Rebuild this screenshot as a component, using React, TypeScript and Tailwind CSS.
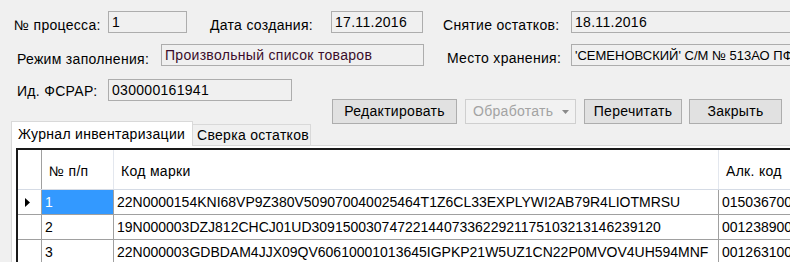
import React from 'react'

const font = "font-['Liberation_Sans',Arial,sans-serif]"

function Field({ w, text, className = '' }: { w: string; text: string; className?: string }) {
  return (
    <div
      className={`${w} h-[22px] shrink-0 border border-[#adadad] bg-[#f0f0f0] pl-[3px] pt-[3px] whitespace-nowrap overflow-hidden ${className}`}
    >
      {text}
    </div>
  )
}

const rows = [
  {
    n: '1',
    code: '22N0000154KNI68VP9Z380V509070040025464T1Z6CL33EXPLYWI2AB79R4LIOTMRSU',
    alc: '0150367000001',
  },
  {
    n: '2',
    code: '19N000003DZJ812CHCJ01UD309150030747221440733622921175103213146239120',
    alc: '0012389000001',
  },
  {
    n: '3',
    code: '22N000003GDBDAM4JJX09QV60610001013645IGPKP21W5UZ1CN22P0MVOV4UH594MNF',
    alc: '0012631000001',
  },
]

export default function App() {
  return (
    <div
      className={`w-[790px] h-[262px] overflow-hidden bg-[#f0f0f0] text-[14px] leading-[15px] tracking-[0.3px] text-black ${font}`}
    >
      {/* row 1 */}
      <div className="flex items-start pt-[11px]">
        <div className="ml-[14px] mt-[7px] w-[94px] shrink-0 whitespace-nowrap">№ процесса:</div>
        <Field w="w-[79px]" text="1" />
        <div className="ml-[23px] mt-[7px] w-[121px] shrink-0 whitespace-nowrap">Дата создания:</div>
        <Field w="w-[92px]" text="17.11.2016" />
        <div className="ml-[20px] mt-[7px] w-[128px] shrink-0 whitespace-nowrap">Снятие остатков:</div>
        <Field w="w-[240px]" text="18.11.2016" />
      </div>

      {/* row 2 */}
      <div className="flex items-start mt-[11px]">
        <div className="ml-[17px] mt-[8px] w-[144px] shrink-0 whitespace-nowrap">Режим заполнения:</div>
        <Field w="w-[263px]" text="Произвольный список товаров" className="text-[#3a0d2a]" />
        <div className="ml-[23px] mt-[7px] w-[124px] shrink-0 whitespace-nowrap">Место хранения:</div>
        <Field w="w-[240px]" text="'СЕМЕНОВСКИЙ' С/М № 513АО ПФ" className="text-[13px] tracking-normal" />
      </div>

      {/* row 3 */}
      <div className="flex items-start mt-[12px]">
        <div className="ml-[17px] mt-[5px] w-[91px] shrink-0 whitespace-nowrap">Ид. ФСРАР:</div>
        <Field w="w-[184px]" text="030000161941" />
      </div>

      {/* buttons */}
      <div className="flex items-start -mt-[2px] pl-[332px]">
        <button className="w-[125px] h-[25px] border border-[#adadad] bg-[#e1e1e1] text-center">
          Редактировать
        </button>
        <button className="ml-[8px] w-[111px] h-[25px] border border-[#cfcfcf] bg-[#f2f2f2] text-[#a3a3a3] flex items-center pl-[7px]">
          <span>Обработать</span>
          <svg width="7" height="4" viewBox="0 0 7 4" className="ml-[9px]">
            <path d="M0 0h7L3.5 4z" fill="#8a8a8a" />
          </svg>
        </button>
        <button className="ml-[8px] w-[98px] h-[25px] border border-[#adadad] bg-[#e1e1e1] text-center">
          Перечитать
        </button>
        <button className="ml-[7px] w-[93px] h-[25px] border border-[#adadad] bg-[#e1e1e1] text-center">
          Закрыть
        </button>
      </div>

      {/* tabs */}
      <div className="flex items-start h-[24px] -mt-[3px] ml-[11px]">
        <div className="relative z-10 w-[182px] h-[25px] border border-b-0 border-[#d9d9d9] bg-white pl-[6px] pt-[5px] whitespace-nowrap">
          Журнал инвентаризации
        </div>
        <div className="mt-[3px] w-[118px] h-[21px] border border-b-0 border-l-0 border-[#d9d9d9] bg-[#f0f0f0] pl-[4px] pt-[3px] whitespace-nowrap">
          Сверка остатков
        </div>
      </div>

      {/* tab page */}
      <div className="ml-[11px] border-l border-t border-[#d9d9d9] bg-white pl-[4px] pt-[2px] h-[200px]">
        <div className="border-l-2 border-t-2 border-[#1a1a1a] bg-white">
          {/* header */}
          <div className="flex h-[40px] border-b border-[#d5dbe5]">
            <div className="w-[24px] shrink-0 border-r border-[#a0a0a0]" />
            <div className="w-[72px] shrink-0 border-r border-[#e3e7ee] flex items-center pl-[7px] pt-[4px] whitespace-nowrap">
              № п/п
            </div>
            <div className="w-[605px] shrink-0 border-r border-[#e3e7ee] flex items-center pl-[7px] pt-[4px] whitespace-nowrap">
              Код марки
            </div>
            <div className="flex-1 flex items-center pl-[7px] pt-[4px] whitespace-nowrap">Алк. код</div>
          </div>
          {rows.map((r, i) => (
            <div key={r.n} className="flex h-[25px] border-b border-[#a0a0a0] tracking-normal">
              <div className="w-[24px] shrink-0 border-r border-[#a0a0a0] flex items-center pl-[7px]">
                {i === 0 && (
                  <svg width="5" height="9" viewBox="0 0 5 9">
                    <path d="M0 0l5 4.5L0 9z" fill="#000" />
                  </svg>
                )}
              </div>
              <div
                className={`w-[72px] shrink-0 border-r border-[#a0a0a0] flex items-center pl-[3px] ${
                  i === 0 ? 'bg-[#3399ff] text-white' : ''
                }`}
              >
                {r.n}
              </div>
              <div className="w-[605px] shrink-0 border-r border-[#a0a0a0] flex items-center pl-[3px] whitespace-nowrap overflow-hidden">
                {r.code}
              </div>
              <div className="flex-1 flex items-center pl-[3px] whitespace-nowrap overflow-hidden">{r.alc}</div>
            </div>
          ))}
        </div>
      </div>
    </div>
  )
}
